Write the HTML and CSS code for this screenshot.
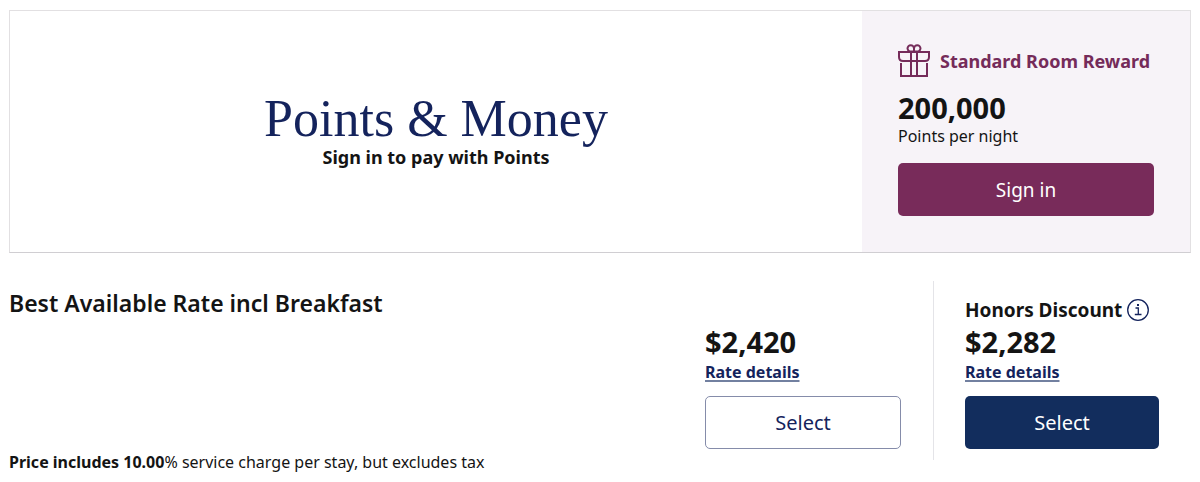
FILE: index.html
```html
<!DOCTYPE html>
<html lang="en">
<head>
    <meta charset="UTF-8">
    <meta name="viewport" content="width=device-width, initial-scale=1.0">
    <title>Select a rate</title>
    <link rel="stylesheet" href="styles.css">
</head>
<body>
    <section class="points-card">
        <div class="points-money">
            <h2 class="points-title">Points &amp; Money</h2>
            <p class="points-text">Sign in to pay with Points</p>
        </div>
        <div class="reward">
            <h3 class="reward-title">
                <svg class="gift" viewBox="0 0 34 34" aria-hidden="true">
                    <path d="M1 8H31V13Q31 17 27 17H5Q1 17 1 13Z"/>
                    <path d="M3 19V32H29V19"/>
                    <path d="M13 8V32M19 8V32"/>
                    <path d="M16 7.500H11.500Q9.500 6 9.500 4.500A3.250 3.250 0 0 1 16 4.500ZM16 7.500H20.500Q22.500 6 22.500 4.500A3.250 3.250 0 0 0 16 4.500Z"/>
                </svg>
                Standard Room Reward
            </h3>
            <p class="price">200,000</p>
            <p class="per-night">Points per night</p>
            <button type="button" class="btn btn-reward">Sign in</button>
        </div>
    </section>

    <section class="rate-row">
        <div class="rate-info">
            <h3 class="rate-name">Best Available Rate incl Breakfast</h3>
            <p class="rate-note"><b>Price includes 10.00</b>% service charge per stay, but excludes tax</p>
        </div>
        <div class="rate">
            <p class="price">$2,420</p>
            <a href="#" class="details">Rate details</a>
            <button type="button" class="btn btn-outline">Select</button>
        </div>
        <div class="rate rate-honors">
            <p class="discount">
                Honors Discount
                <button type="button" class="info" aria-label="About the Honors Discount">
                    <svg viewBox="0 0 24 24" aria-hidden="true">
                        <circle cx="12" cy="12" r="10.300"/>
                        <path d="M9.500 10H12.300V16.500M8.800 16.500H15.500"/>
                        <path class="dot" d="M11 6H13V8H11Z"/>
                    </svg>
                </button>
            </p>
            <p class="price">$2,282</p>
            <a href="#" class="details">Rate details</a>
            <button type="button" class="btn btn-primary">Select</button>
        </div>
    </section>
</body>
</html>
```
FILE: styles.css
```css
* {
    box-sizing: border-box;
}

body {
    margin: 10px 9px;
    background-color: #fff;
    color: #141414;
    font-family: "Noto Sans", "Open Sans", sans-serif;
    font-size: 16px;
    line-height: 20px;
}

h2,
h3,
p {
    margin: 0;
}

.points-card {
    display: flex;
    border: 1px solid #e2e0e2;
    border-bottom-color: #d0ced2;
}

.points-money {
    flex: 1;
    display: flex;
    flex-direction: column;
    justify-content: center;
    align-items: center;
    padding-bottom: 2px;
}

.points-title {
    color: #14235c;
    font-family: "Liberation Serif", serif;
    font-size: 52px;
    font-weight: normal;
    line-height: 52px;
}

.points-text {
    font-size: 18px;
    font-weight: bold;
    line-height: 24px;
}

.reward {
    width: 328px;
    padding: 32px 36px 36px;
    background-color: #f7f3f8;
}

.reward-title {
    display: flex;
    align-items: center;
    gap: 8px;
    margin-bottom: 11px;
    color: #752b5a;
    font-size: 18px;
    line-height: 36px;
    white-space: nowrap;
}

.gift {
    flex: none;
    width: 34px;
    height: 34px;
    fill: none;
    stroke: #752b5a;
    stroke-width: 2;
}

.price {
    font-size: 29px;
    font-weight: bold;
    line-height: 36px;
}

.per-night {
    margin-bottom: 17px;
}

.btn {
    width: 100%;
    height: 53px;
    border: 1px solid transparent;
    border-radius: 5px;
    color: #fff;
    font-family: inherit;
    font-size: 20px;
    cursor: pointer;
}

.btn-reward {
    background-color: #782b5a;
    font-size: 19px;
}

.btn-outline {
    border-color: #858caa;
    background-color: #fff;
    color: #14235c;
}

.btn-primary {
    background-color: #122d5d;
}

.rate-row {
    display: flex;
    margin-top: 28px;
}

.rate-info {
    flex: 1;
    display: flex;
    flex-direction: column;
    justify-content: space-between;
    padding-top: 8px;
}

.rate-name {
    font-size: 23px;
    font-weight: 600;
    line-height: 28px;
}

.rate {
    display: flex;
    flex-direction: column;
    align-items: flex-start;
    justify-content: flex-end;
    width: 228px;
    margin-bottom: 12px;
    padding: 15px 32px 11px 0;
}

.rate-honors {
    width: 258px;
    padding-left: 31px;
    border-left: 1px solid #e4e4e8;
}

.discount {
    display: flex;
    align-items: center;
    gap: 4px;
    font-size: 19px;
    font-weight: bold;
    line-height: 28px;
    white-space: nowrap;
}

.info {
    width: 24px;
    height: 24px;
    padding: 0;
    border: none;
    background: none;
    cursor: pointer;
}

.info svg {
    display: block;
    fill: none;
    stroke: #14235c;
    stroke-width: 1.300;
}

.info .dot {
    fill: #14235c;
    stroke: none;
}

.details {
    margin-bottom: 12px;
    color: #14235c;
    font-weight: bold;
    line-height: 24px;
    text-decoration-color: #7280a0;
    text-decoration-thickness: 2px;
    text-underline-offset: 2px;
}
```
